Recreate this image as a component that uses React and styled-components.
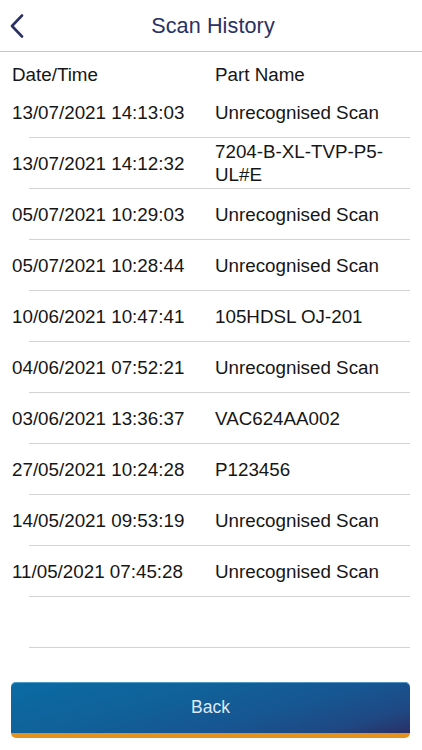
import React from 'react';
import styled, { createGlobalStyle } from 'styled-components';

const navy = '#2b3163';
const lineColor = '#d3d3d6';

const GlobalStyle = createGlobalStyle`
    html, body {
        margin: 0;
        padding: 0;
        background: #fff;
    }
    body {
        font-family: "Liberation Sans", Arial, sans-serif;
        color: #161616;
    }
`;

const Page = styled.div`
    height: 750px;
    display: flex;
    flex-direction: column;
    overflow: hidden;
`;

const TopBar = styled.header`
    position: relative;
    height: 51px;
    flex: none;
    display: flex;
    align-items: center;
    justify-content: center;
    border-bottom: 1px solid #c6c6c8;
`;

const BackIcon = styled.button`
    position: absolute;
    left: 6px;
    top: 11px;
    width: 22px;
    height: 30px;
    padding: 0;
    border: 0;
    background: none;
    display: flex;
    align-items: center;
    justify-content: center;
`;

const Title = styled.h1`
    margin: 0 0 0 4px;
    font-size: 21.6px;
    font-weight: 400;
    color: ${navy};
    letter-spacing: 0.1px;
`;

const Grid = styled.div`
    display: grid;
    grid-template-columns: 203px 1fr;
    padding-left: 12px;
    font-size: 18.8px;
`;

const HeadRow = styled(Grid)`
    flex: none;
    height: 35px;
    padding-top: 12px;
    line-height: 22px;
    box-sizing: border-box;
`;

const RowLine = styled.div`
    flex: none;
    height: 51px;
    margin: 0 12px 0 29px;
    border-bottom: 1px solid ${lineColor};
    box-sizing: border-box;
    display: flex;
`;

const RowGrid = styled(Grid)`
    flex: 1;
    margin-left: -29px;
    align-items: center;
    line-height: 23px;
`;

const Cell = styled.span`
    padding-right: ${p => (p.$part ? '0' : '4px')};
    white-space: ${p => (p.$part ? 'normal' : 'nowrap')};
`;

const BackButton = styled.button`
    margin: auto 12px 12px 11px;
    height: 56px;
    flex: none;
    border: 0;
    border-radius: 5px;
    border-bottom: 5px solid #e5921c;
    background: linear-gradient(165deg, #0b6ba3 0%, #10629a 35%, #175591 65%, #1f4882 85%, #2a2f66 100%);
    color: #dfe9f5;
    font-family: "Liberation Sans", Arial, sans-serif;
    font-size: 17.5px;
    padding: 0;
    box-shadow: inset 0 1px 0 rgba(120, 190, 230, 0.6);
`;

const scans = [
    ['13/07/2021 14:13:03', 'Unrecognised Scan'],
    ['13/07/2021 14:12:32', '7204-B-XL-TVP-P5-UL#E'],
    ['05/07/2021 10:29:03', 'Unrecognised Scan'],
    ['05/07/2021 10:28:44', 'Unrecognised Scan'],
    ['10/06/2021 10:47:41', '105HDSL OJ-201'],
    ['04/06/2021 07:52:21', 'Unrecognised Scan'],
    ['03/06/2021 13:36:37', 'VAC624AA002'],
    ['27/05/2021 10:24:28', 'P123456'],
    ['14/05/2021 09:53:19', 'Unrecognised Scan'],
    ['11/05/2021 07:45:28', 'Unrecognised Scan'],
    ['', ''],
];

const App = () => (
    <Page>
        <GlobalStyle />
        <TopBar>
            <BackIcon aria-label="Back">
                <svg width="14" height="24" viewBox="0 0 14 24" fill="none">
                    <polyline points="12,1.5 2,12 12,22.5" stroke={navy} strokeWidth="2.6" strokeLinecap="round" strokeLinejoin="round" />
                </svg>
            </BackIcon>
            <Title>Scan History</Title>
        </TopBar>
        <HeadRow>
            <Cell>Date/Time</Cell>
            <Cell $part>Part Name</Cell>
        </HeadRow>
        {scans.map(([date, part], i) => (
            <RowLine key={i}>
                <RowGrid>
                    <Cell>{date}</Cell>
                    <Cell $part>{part}</Cell>
                </RowGrid>
            </RowLine>
        ))}
        <BackButton>Back</BackButton>
    </Page>
);

export default App;
